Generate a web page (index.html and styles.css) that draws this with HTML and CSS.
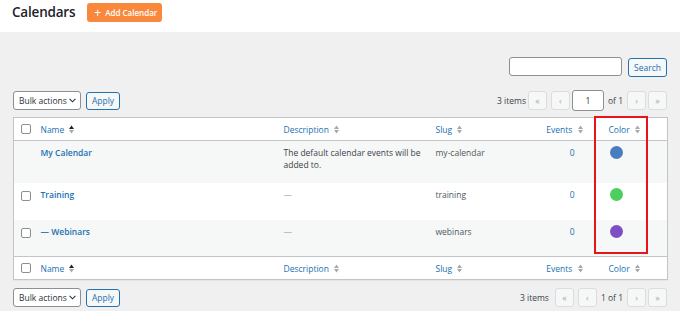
FILE: index.html
```html
<!DOCTYPE html>
<html>
<head>
    <title>Calendars</title>
    <link rel="stylesheet" href="styles.css">
</head>
<body>
    <div id="topBar">
        <h1>Calendars</h1>
        <a class="addButton" href="#"><span class="plus">+</span>Add Calendar</a>
    </div>

    <div id="content">
        <div class="searchBox">
            <input type="text" class="searchInput">
            <button class="lightButton searchButton">Search</button>
        </div>

        <div class="tablenav">
            <div class="actions">
                <div class="selectBox">Bulk actions
                    <svg width="7" height="5" viewBox="0 0 7 5"><path d="M0.6 0.8 L3.5 3.8 L6.4 0.8" fill="none" stroke="#2c3338" stroke-width="1.1"/></svg>
                </div>
                <button class="lightButton applyButton">Apply</button>
            </div>
            <div class="pages">
                <span class="count">3 items</span>
                <span class="pageButton">&laquo;</span>
                <span class="pageButton prev">&lsaquo;</span>
                <input class="pageInput" type="text" value="1">
                <span class="ofText">of 1</span>
                <span class="pageButton">&rsaquo;</span>
                <span class="pageButton">&raquo;</span>
            </div>
        </div>

        <div class="tableWrap">
            <table class="listTable">
                <colgroup>
                    <col style="width: 20px">
                    <col style="width: 243px">
                    <col style="width: 152px">
                    <col style="width: 102px">
                    <col style="width: 64px">
                    <col style="width: 73px">
                </colgroup>
                <thead>
                    <tr>
                        <th class="cbCol"><span class="checkBox"></span></th>
                        <th>Name <svg class="sortIcon" width="5" height="9" viewBox="0 0 5 9"><path d="M0 4 L2.5 0.5 L5 4Z" fill="#1d2327"/><path d="M0 5 L5 5 L2.5 8.5Z" fill="#a7aaad"/></svg></th>
                        <th>Description <svg class="sortIcon" width="5" height="9" viewBox="0 0 5 9"><path d="M0 4 L2.5 0.5 L5 4Z" fill="#a7aaad"/><path d="M0 5 L5 5 L2.5 8.5Z" fill="#a7aaad"/></svg></th>
                        <th>Slug <svg class="sortIcon" width="5" height="9" viewBox="0 0 5 9"><path d="M0 4 L2.5 0.5 L5 4Z" fill="#a7aaad"/><path d="M0 5 L5 5 L2.5 8.5Z" fill="#a7aaad"/></svg></th>
                        <th class="eventsCol">Events <svg class="sortIcon" width="5" height="9" viewBox="0 0 5 9"><path d="M0 4 L2.5 0.5 L5 4Z" fill="#a7aaad"/><path d="M0 5 L5 5 L2.5 8.5Z" fill="#a7aaad"/></svg></th>
                        <th class="colorCol">Color <svg class="sortIcon" width="5" height="9" viewBox="0 0 5 9"><path d="M0 4 L2.5 0.5 L5 4Z" fill="#a7aaad"/><path d="M0 5 L5 5 L2.5 8.5Z" fill="#a7aaad"/></svg></th>
                    </tr>
                </thead>
                <tbody>
                    <tr class="altRow firstRow">
                        <td class="cbCol"></td>
                        <td><a class="rowTitle" href="#">My Calendar</a></td>
                        <td>The default calendar events will be added to.</td>
                        <td class="slug">my-calendar</td>
                        <td class="eventsCol"><a href="#">0</a></td>
                        <td class="colorCol"><span class="dot" style="background: #4a7dc0"></span></td>
                    </tr>
                    <tr>
                        <td class="cbCol"><span class="checkBox"></span></td>
                        <td><a class="rowTitle" href="#">Training</a></td>
                        <td class="muted">&mdash;</td>
                        <td class="slug">training</td>
                        <td class="eventsCol"><a href="#">0</a></td>
                        <td class="colorCol"><span class="dot" style="background: #4ccf5e"></span></td>
                    </tr>
                    <tr class="altRow">
                        <td class="cbCol"><span class="checkBox"></span></td>
                        <td><a class="rowTitle" href="#">&mdash; Webinars</a></td>
                        <td class="muted">&mdash;</td>
                        <td class="slug">webinars</td>
                        <td class="eventsCol"><a href="#">0</a></td>
                        <td class="colorCol"><span class="dot" style="background: #7e4fc2"></span></td>
                    </tr>
                </tbody>
                <tfoot>
                    <tr>
                        <th class="cbCol"><span class="checkBox"></span></th>
                        <th>Name <svg class="sortIcon" width="5" height="9" viewBox="0 0 5 9"><path d="M0 4 L2.5 0.5 L5 4Z" fill="#1d2327"/><path d="M0 5 L5 5 L2.5 8.5Z" fill="#a7aaad"/></svg></th>
                        <th>Description <svg class="sortIcon" width="5" height="9" viewBox="0 0 5 9"><path d="M0 4 L2.5 0.5 L5 4Z" fill="#a7aaad"/><path d="M0 5 L5 5 L2.5 8.5Z" fill="#a7aaad"/></svg></th>
                        <th>Slug <svg class="sortIcon" width="5" height="9" viewBox="0 0 5 9"><path d="M0 4 L2.5 0.5 L5 4Z" fill="#a7aaad"/><path d="M0 5 L5 5 L2.5 8.5Z" fill="#a7aaad"/></svg></th>
                        <th class="eventsCol">Events <svg class="sortIcon" width="5" height="9" viewBox="0 0 5 9"><path d="M0 4 L2.5 0.5 L5 4Z" fill="#a7aaad"/><path d="M0 5 L5 5 L2.5 8.5Z" fill="#a7aaad"/></svg></th>
                        <th class="colorCol">Color <svg class="sortIcon" width="5" height="9" viewBox="0 0 5 9"><path d="M0 4 L2.5 0.5 L5 4Z" fill="#a7aaad"/><path d="M0 5 L5 5 L2.5 8.5Z" fill="#a7aaad"/></svg></th>
                    </tr>
                </tfoot>
            </table>
            <div class="highlight"></div>
        </div>

        <div class="tablenav bottomNav">
            <div class="actions">
                <div class="selectBox">Bulk actions
                    <svg width="7" height="5" viewBox="0 0 7 5"><path d="M0.6 0.8 L3.5 3.8 L6.4 0.8" fill="none" stroke="#2c3338" stroke-width="1.1"/></svg>
                </div>
                <button class="lightButton applyButton">Apply</button>
            </div>
            <div class="pages">
                <span class="count">3 items</span>
                <span class="pageButton">&laquo;</span>
                <span class="pageButton">&lsaquo;</span>
                <span class="ofText">1 of 1</span>
                <span class="pageButton">&rsaquo;</span>
                <span class="pageButton last">&raquo;</span>
            </div>
        </div>
    </div>
</body>
</html>
```

FILE: styles.css
```css
body {
    margin: 0;
    background-color: #f0f0f1;
    font-family: "Open Sans", sans-serif;
    font-size: 8.5px;
    color: #3c434a;
}

#topBar {
    background-color: #fff;
    height: 32px;
    box-sizing: border-box;
    padding: 3px 12px 0;
    display: flex;
    align-items: flex-start;
    gap: 12px;
}

#topBar h1 {
    margin: 0;
    font-size: 13.5px;
    font-weight: 600;
    line-height: 19px;
    color: #1d2327;
    letter-spacing: -0.2px;
}

.addButton {
    display: flex;
    align-items: center;
    height: 19px;
    width: 75px;
    box-sizing: border-box;
    padding: 0 7px;
    background-color: #f9883c;
    border-radius: 3px;
    color: #fff;
    font-size: 8px;
    font-weight: 600;
    white-space: nowrap;
    text-decoration: none;
}

.plus {
    font-size: 12px;
    font-weight: 400;
    margin-right: 4px;
    line-height: 12px;
}

#content {
    padding: 25px 13px 0;
}

.searchBox {
    display: flex;
    justify-content: flex-end;
    align-items: flex-start;
    gap: 6px;
}

.searchInput {
    width: 113px;
    height: 19px;
    box-sizing: border-box;
    margin: 0;
    border: 1px solid #8c8f94;
    border-radius: 3px;
    background: #fff;
}

.lightButton {
    height: 19px;
    box-sizing: border-box;
    margin: 0;
    padding: 0;
    border: 1px solid #2271b1;
    border-radius: 3px;
    background-color: #f6f7f7;
    color: #2271b1;
    font-family: "Open Sans", sans-serif;
    font-size: 8.5px;
}

.searchButton {
    width: 39px;
    margin-top: 1px;
}

.tablenav {
    display: flex;
    justify-content: space-between;
    align-items: center;
    height: 21px;
    margin-top: 13px;
}

.bottomNav {
    margin-top: 7px;
}

.actions {
    display: flex;
    align-items: center;
    gap: 5px;
}

.selectBox {
    display: flex;
    align-items: center;
    justify-content: space-between;
    width: 68px;
    height: 19px;
    box-sizing: border-box;
    padding: 0 4px 0 5px;
    border: 1px solid #8c8f94;
    border-radius: 3px;
    background-color: #fff;
    color: #2c3338;
    font-size: 8.5px;
    white-space: nowrap;
}

.applyButton {
    width: 34px;
    height: 18px;
}

.pages {
    display: flex;
    align-items: center;
    gap: 2px;
}

.pageButton {
    display: flex;
    align-items: center;
    justify-content: center;
    width: 19px;
    height: 19px;
    box-sizing: border-box;
    border: 1px solid #dcdcde;
    border-radius: 3px;
    background-color: #f6f7f7;
    color: #a7aaad;
    font-size: 9px;
}

.pageButton.prev {
    margin-left: 2px;
}

.pageInput {
    width: 32px;
    height: 21px;
    box-sizing: border-box;
    margin: 0;
    padding: 0;
    border: 1px solid #8c8f94;
    border-radius: 3px;
    text-align: center;
    font-family: "Open Sans", sans-serif;
    font-size: 8.5px;
    color: #2c3338;
}

.ofText {
    margin: 0 2px;
}

.bottomNav .pages {
    gap: 4px;
}

.bottomNav .count {
    margin-right: 2px;
}

.bottomNav .ofText {
    margin: 0;
}

.bottomNav .pageButton.last {
    margin-left: -2px;
}

.tableWrap {
    position: relative;
    margin-top: 6px;
}

.listTable {
    width: 100%;
    table-layout: fixed;
    border-collapse: collapse;
    border: 1px solid #c3c4c7;
    background-color: #fff;
    box-shadow: 0 1px 1px rgba(0, 0, 0, 0.04);
}

.listTable th {
    height: 22px;
    padding: 0 7px;
    text-align: left;
    font-weight: 400;
    color: #2271b1;
    vertical-align: middle;
    white-space: nowrap;
}

.listTable thead th {
    border-bottom: 1px solid #c3c4c7;
}

.listTable tfoot th {
    border-top: 1px solid #c3c4c7;
}

.sortIcon {
    margin-left: 3px;
    vertical-align: -1px;
}

.listTable tbody tr {
    height: 37px;
}

.listTable tbody tr.firstRow {
    height: 42px;
}

.listTable tbody tr.altRow {
    background-color: #f6f7f7;
}

.listTable td {
    padding: 6px 7px 0;
    vertical-align: top;
    line-height: 12px;
}

.listTable .cbCol {
    padding: 0 0 0 7px;
}

.listTable td.cbCol {
    padding-top: 8px;
}

.checkBox {
    display: block;
    width: 10px;
    height: 10px;
    box-sizing: border-box;
    border: 1px solid #8c8f94;
    border-radius: 2px;
    background-color: #fff;
}

.rowTitle {
    color: #2271b1;
    font-weight: 600;
    text-decoration: none;
}

.muted {
    color: #a7aaad;
}

.slug {
    color: #50575e;
}

.listTable .eventsCol {
    text-align: right;
    padding-right: 12px;
}

.listTable td.eventsCol {
    padding-right: 20px;
}

.listTable td.eventsCol a {
    color: #2271b1;
    text-decoration: none;
}

.listTable .colorCol {
    padding-left: 14px;
}

.listTable td.colorCol {
    padding: 5px 0 0 15px;
}

.dot {
    display: block;
    width: 13px;
    height: 13px;
    border-radius: 50%;
}

.highlight {
    position: absolute;
    left: 581px;
    top: -1px;
    width: 54px;
    height: 138px;
    box-sizing: border-box;
    border: 2px solid #e8131b;
}
```
